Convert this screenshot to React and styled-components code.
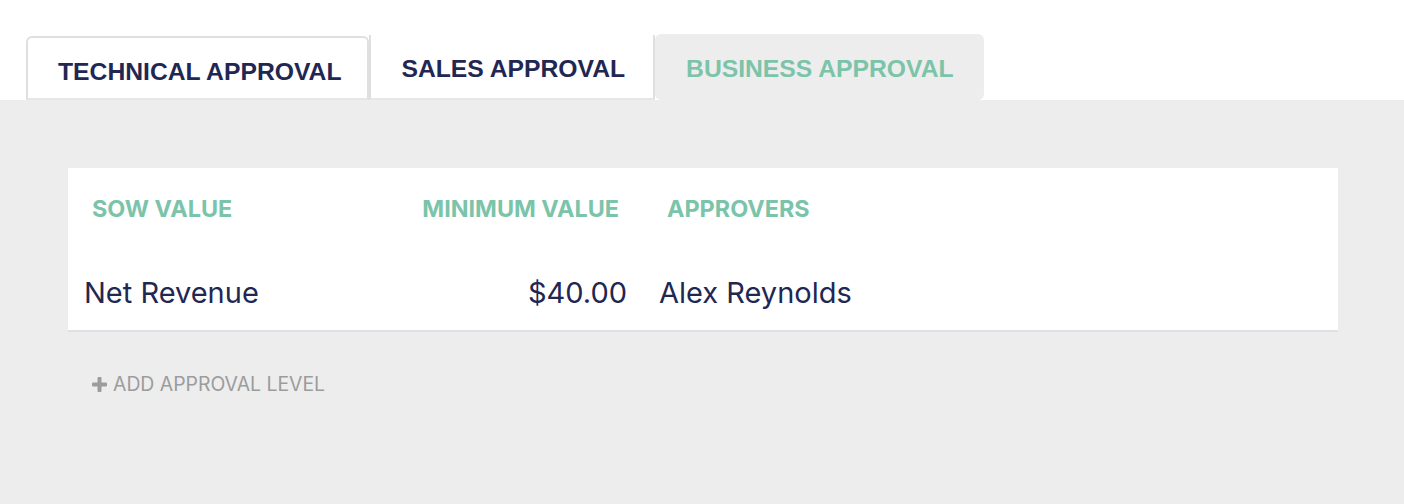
import styled, { createGlobalStyle, css } from "styled-components"

const GlobalStyle = createGlobalStyle`
  html, body {
    margin: 0;
    padding: 0;
    background: #ffffff;
    font-family: "Inter", "Noto Sans", sans-serif;
  }
`

const navy = "#1f2752"
const green = "#7bc4a9"
const panelGray = "#ededed"
const lineGray = "#dfdfdf"

const Page = styled.div`
  display: flex;
  flex-direction: column;
  height: 504px;
`

const TabBar = styled.div`
  display: flex;
  align-items: flex-end;
  padding: 0 0 0 26px;
  height: 100px;
  box-sizing: border-box;
`

const Tab = styled.div`
  box-sizing: border-box;
  display: flex;
  align-items: center;
  font-family: "Liberation Sans", Arial, sans-serif;
  font-weight: 700;
  font-size: 24.7px;
  line-height: 28px;
  text-transform: uppercase;
  white-space: nowrap;
  color: ${navy};
  background: #ffffff;

  ${(p) =>
    p.$kind === "outlined" &&
    css`
      height: 64px;
      padding: 7px 26px 0 30px;
      border: 2px solid ${lineGray};
      border-radius: 6px 6px 0 0;
      border-bottom-color: #e6e6e6;
    `}

  ${(p) =>
    p.$kind === "plain" &&
    css`
      height: 65px;
      padding: 4px 28px 0 30px;
      border-left: 2px solid ${lineGray};
      border-right: 2px solid ${lineGray};
      border-bottom: 2px solid #e6e6e6;
    `}

  ${(p) =>
    p.$kind === "active" &&
    css`
      height: 66px;
      padding: 3px 30px 0 31px;
      background: ${panelGray};
      color: ${green};
      border-radius: 6px;
    `}
`

const Panel = styled.div`
  flex: 1;
  background: ${panelGray};
  padding: 68px 66px 0 68px;
`

const Card = styled.div`
  background: #ffffff;
  border-bottom: 2px solid #dde0e4;
`

const Row = styled.div`
  display: grid;
  grid-template-columns: 300px 275px 1fr;
  align-items: center;
  box-sizing: border-box;
  height: ${(p) => p.$height}px;
  padding-top: ${(p) => p.$offset || 0}px;
`

const HeadCell = styled.div`
  padding: 0 24px;
  font-size: 23.4px;
  font-weight: 700;
  line-height: 28px;
  color: ${green};
  text-transform: uppercase;
  text-align: ${(p) => (p.$right ? "right" : "left")};
  white-space: nowrap;
`

const Cell = styled.div`
  padding: 0 16px;
  font-size: 29px;
  font-weight: 400;
  line-height: 34px;
  color: ${navy};
  text-align: ${(p) => (p.$right ? "right" : "left")};
  white-space: nowrap;
`

const AddLevel = styled.button`
  display: flex;
  align-items: center;
  gap: 6px;
  margin: 41px 0 0 24px;
  padding: 0;
  border: none;
  background: none;
  cursor: pointer;
  font-family: "Inter", sans-serif;
  font-size: 19.4px;
  line-height: 22px;
  color: #9c9c9c;
  text-transform: uppercase;
`

const PlusIcon = () => (
  <svg width="15" height="15" viewBox="0 0 15 15">
    <rect x="5.5" y="0" width="4" height="15" rx="1" fill="#9c9c9c" />
    <rect x="0" y="5.5" width="15" height="4" rx="1" fill="#9c9c9c" />
  </svg>
)

export default function App() {
  const levels = [{ sow: "Net Revenue", min: "$40.00", approvers: "Alex Reynolds" }]
  return (
    <>
      <GlobalStyle />
      <Page>
        <TabBar>
          <Tab $kind="outlined">Technical Approval</Tab>
          <Tab $kind="plain">Sales Approval</Tab>
          <Tab $kind="active">Business Approval</Tab>
        </TabBar>
        <Panel>
          <Card>
            <Row $height={82}>
              <HeadCell>SOW Value</HeadCell>
              <HeadCell $right>Minimum Value</HeadCell>
              <HeadCell>Approvers</HeadCell>
            </Row>
            {levels.map((l) => (
              <Row key={l.sow} $height={80} $offset={5}>
                <Cell>{l.sow}</Cell>
                <Cell $right>{l.min}</Cell>
                <Cell>{l.approvers}</Cell>
              </Row>
            ))}
          </Card>
          <AddLevel>
            <PlusIcon />
            Add Approval Level
          </AddLevel>
        </Panel>
      </Page>
    </>
  )
}
